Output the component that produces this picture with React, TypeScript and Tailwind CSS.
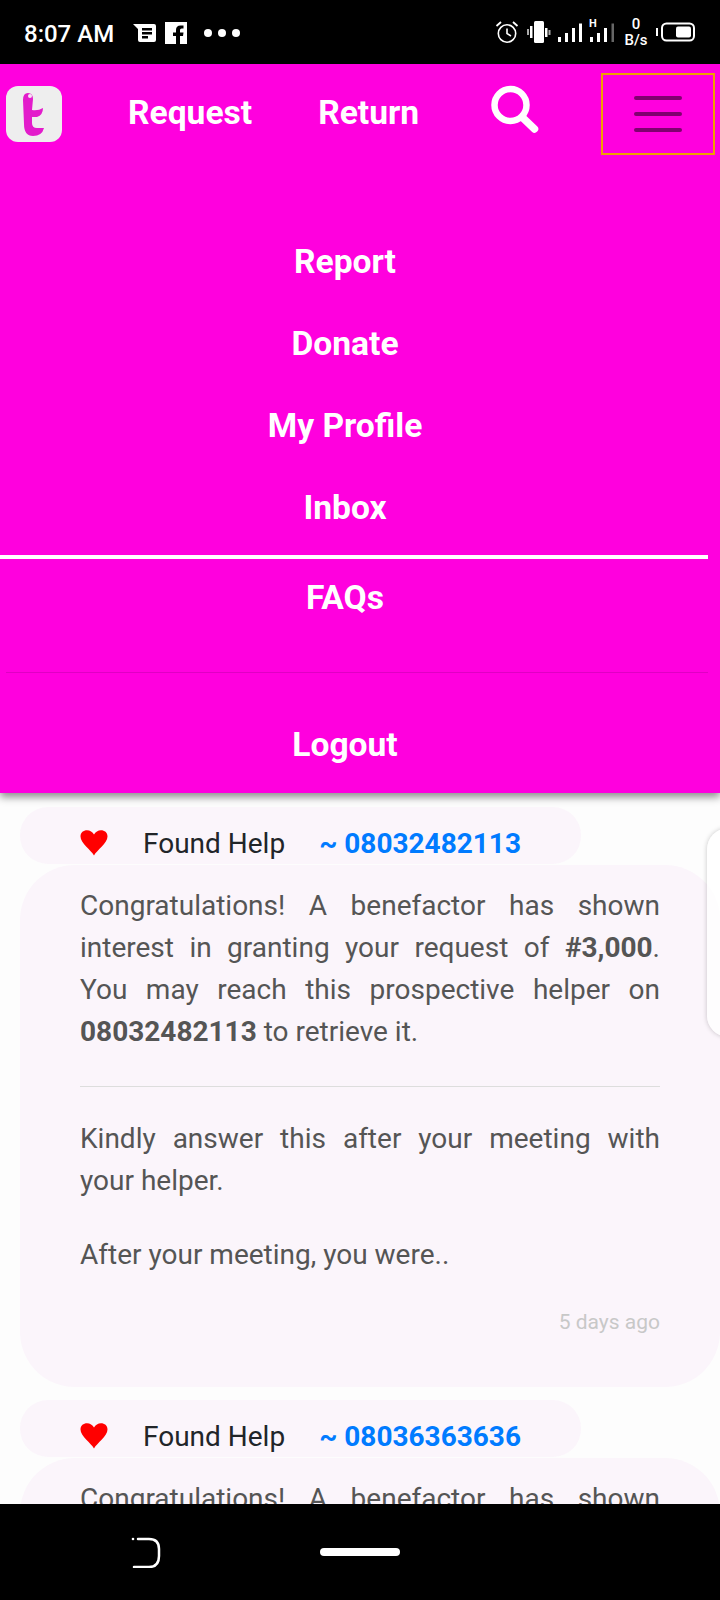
import React from "react";

const roboto = "font-['Roboto',sans-serif]";

function Heart() {
  return (
    <svg width="28" height="26" viewBox="0 0 28 26" className="shrink-0">
      <path d="M14 25.500 C11 20 0.500 13 0.500 6.500 C0.500 2.500 3.500 0.300 7 0.300 C10 0.300 12.500 2 14 4.500 C15.500 2 18 0.300 21 0.300 C24.500 0.300 27.500 2.500 27.500 6.500 C27.500 13 17 20 14 25.500 Z" fill="#ff0000" />
    </svg>
  );
}

function PillHeader({ phone }: { phone: string }) {
  return (
    <div className="box-border flex h-[57px] w-[561px] items-center rounded-[28px] bg-[#fbf5fb] pl-[60px] pt-[14px]">
      <Heart />
      <span className="ml-[35px] text-[28px] leading-none text-[#212529] relative top-[1px]">Found Help</span>
      <span className="ml-[34px] text-[28px] font-bold leading-none text-[#007bff] relative top-[1px]">~ {phone}</span>
    </div>
  );
}

function MenuItem({ label, cls }: { label: string; cls: string }) {
  return <div className={"text-center text-[33.600px] font-bold leading-[36px] text-white " + cls}>{label}</div>;
}

function StatusIcons() {
  return (
    <div className="-mt-[4px] flex items-center">
      <svg width="24" height="24" viewBox="0 0 24 24" fill="none" stroke="#fff" strokeWidth="1.600" className="mr-[8px]">
        <circle cx="12" cy="13.500" r="8.700" />
        <path d="M12 8.500 V13.500 L16 16" />
        <path d="M1.500 6 L6 2 M22.500 6 L18 2" strokeWidth="1.800" />
      </svg>
      <svg width="24" height="24" viewBox="0 0 24 24" fill="#fff" className="mr-[7px]">
        <rect x="0" y="9" width="2" height="6" fill="#aaa" />
        <rect x="3" y="6" width="2.500" height="12" />
        <rect x="7" y="1" width="10" height="22" rx="1.500" />
        <rect x="18" y="8" width="2.500" height="9" />
        <rect x="21.500" y="10" width="2" height="5" fill="#aaa" />
      </svg>
      <svg width="56" height="32" viewBox="0 0 56 32" className="mr-[10px]">
        <rect x="0" y="21" width="3" height="5" fill="#fff" />
        <rect x="7" y="17" width="3" height="9" fill="#fff" />
        <rect x="14" y="12" width="3" height="14" fill="#fff" />
        <rect x="21" y="7.500" width="3" height="18.500" fill="#fff" />
        <text x="31" y="11" fontSize="11" fontWeight="700" fill="#fff" fontFamily="Roboto, sans-serif">H</text>
        <rect x="32" y="21" width="3" height="5" fill="#fff" />
        <rect x="39" y="17" width="3" height="9" fill="#fff" />
        <rect x="46" y="12" width="3" height="14" fill="#fff" />
        <rect x="53.500" y="7.500" width="2.500" height="18.500" fill="#666" />
      </svg>
      <div className="mr-[8px] flex w-[24px] flex-col items-center text-[15px] font-medium leading-[16px] text-white">
        <span>0</span>
        <span>B/s</span>
      </div>
      <svg width="39" height="20" viewBox="0 0 39 20" fill="none">
        <rect x="0" y="6" width="2" height="8" fill="#fff" />
        <rect x="6" y="1.500" width="32" height="17" rx="4.500" stroke="#fff" strokeWidth="2" />
        <rect x="20" y="4.500" width="15" height="11" rx="2" fill="#fff" />
      </svg>
    </div>
  );
}

function Card({ phone, amount, children }: { phone: string; amount: string; children?: React.ReactNode }) {
  return (
    <div className="ml-[20px]">
      <PillHeader phone={phone} />
      <div className="mt-[1px] h-[522px] w-[700px] rounded-[55px] bg-[#fbf5fb] pl-[60px] pr-[60px] pt-[20px] text-[28px] leading-[42px] text-[#555555]">
        <p className="text-justify">
          Congratulations! A benefactor has shown interest in granting your request of <b>{amount}</b>. You may reach
          this prospective helper on <b>{phone}</b> to retrieve it.
        </p>
        {children}
      </div>
    </div>
  );
}

export default function App() {
  return (
    <div className={"relative flex h-[1600px] w-[720px] flex-col overflow-hidden bg-[#fdfdfd] " + roboto}>
      <div className="box-border flex h-[64px] shrink-0 items-center justify-between bg-black pl-[24px] pr-[25px] pt-[4px]">
        <div className="flex items-center">
          <span className="text-[24px] font-medium leading-none text-white">8:07 AM</span>
          <svg width="24" height="20" viewBox="0 0 24 20" className="-mt-[3px] ml-[19px]">
            <path d="M0 1 H21 Q23 1 23 3 V17 Q23 19 21 19 H7 Q5 19 5 17 V6 Z" fill="#fff" />
            <rect x="9" y="5" width="10" height="2.500" fill="#000" />
            <rect x="9" y="9" width="10" height="2.500" fill="#000" />
            <rect x="9" y="13" width="6" height="2.500" fill="#000" />
          </svg>
          <svg width="22" height="22" viewBox="0 0 22 22" className="-mt-[3px] ml-[8px]">
            <rect width="22" height="22" fill="#fff" />
            <path d="M15 22 V14 H18 L18.500 10.500 H15 V8 Q15 6.500 16.700 6.500 H18.500 V3.500 H15.500 Q11 3.500 11 8 V10.500 H8 V14 H11 V22 Z" fill="#000" />
          </svg>
          <div className="-mt-[3px] ml-[17px] flex gap-[6px]">
            <span className="h-[8px] w-[8px] rounded-full bg-white" />
            <span className="h-[8px] w-[8px] rounded-full bg-white" />
            <span className="h-[8px] w-[8px] rounded-full bg-white" />
          </div>
        </div>
        <StatusIcons />
      </div>

      <nav className="relative z-10 h-[729px] shrink-0 bg-[#ff00de] shadow-[0_4px_8px_rgba(0,0,0,0.45)]">
        <div className="flex h-[90px] items-start pl-[6px] pt-[9px]">
          <div className="mt-[13px] flex h-[56px] w-[56px] shrink-0 items-center justify-center rounded-[12px] bg-[#eeeeee]">
            <svg width="56" height="56" viewBox="0 0 56 56">
              <path d="M17 14 Q17 7 22 7 Q27 7 27 13 L26 24 Q32 25 37 22 Q37 29 31 31 L26 31 L26 37 Q26 42 31 42 L38 42 Q36 50 27 50 Q18 50 18 38 Z" fill="#e31ccb" />
              <circle cx="24" cy="10" r="2" fill="#f6e4f4" />
            </svg>
          </div>
          <span className="ml-[66px] mt-[22px] text-[33.600px] font-bold leading-[36px] text-white">Request</span>
          <span className="ml-[66px] mt-[22px] text-[33.600px] font-bold leading-[36px] text-white">Return</span>
          <svg width="48" height="48" viewBox="0 0 48 48" fill="none" className="ml-[72px] mt-[12px] shrink-0">
            <circle cx="19.500" cy="20" r="16" stroke="#fff" strokeWidth="6.500" />
            <path d="M32 33 L43.500 44" stroke="#fff" strokeWidth="7.500" strokeLinecap="round" />
          </svg>
          <div className="ml-[62px] flex h-[82px] w-[114px] shrink-0 flex-col items-center justify-center gap-[12px] border-2 border-[#f0a000]">
            <span className="h-[4px] w-[48px] rounded-full bg-[#800070]" />
            <span className="h-[4px] w-[48px] rounded-full bg-[#800070]" />
            <span className="h-[4px] w-[48px] rounded-full bg-[#800070]" />
          </div>
        </div>
        <div className="w-[690px]">
          <MenuItem label="Report" cls="mt-[90px]" />
          <MenuItem label="Donate" cls="mt-[46px]" />
          <MenuItem label="My Profile" cls="mt-[46px]" />
          <MenuItem label="Inbox" cls="mt-[46px]" />
        </div>
        <div className="mt-[29px] h-[4px] w-[708px] bg-white" />
        <div className="w-[690px]">
          <MenuItem label="FAQs" cls="mt-[21px]" />
        </div>
        <div className="ml-[6px] mt-[56px] h-px w-[702px] bg-[#e000c4]" />
        <div className="w-[690px]">
          <MenuItem label="Logout" cls="mt-[54px]" />
        </div>
      </nav>

      <main className="flex-1 overflow-hidden pt-[14px]">
        <Card phone="08032482113" amount="#3,000">
          <div className="mt-[33px] h-px w-full bg-[#dddddd]" />
          <p className="mt-[31px] text-justify">Kindly answer this after your meeting with your helper.</p>
          <p className="mt-[32px]">After your meeting, you were..</p>
          <p className="mt-[31px] text-right text-[21px] leading-[30px] text-[#c8c8c8]">5 days ago</p>
        </Card>
        <div className="mt-[13px]">
          <Card phone="08036363636" amount="#3,000" />
        </div>
      </main>

      <div className="absolute -right-[30px] top-[828px] h-[209px] w-[43px] rounded-[28px] bg-white/80 shadow-[0_0_5px_rgba(0,0,0,0.22)]" />

      <footer className="relative z-10 flex h-[96px] shrink-0 items-start bg-black">
        <svg width="30" height="32" viewBox="0 0 30 32" fill="none" className="ml-[131px] mt-[32px]">
          <path d="M3 31 H18 Q28 31 28 20 V13 Q28 3 18 3 H7" stroke="#fff" strokeWidth="2.500" strokeLinecap="round" />
          <circle cx="2" cy="3" r="1.300" fill="#fff" />
        </svg>
        <div className="ml-[159px] mt-[44px] h-[8px] w-[80px] rounded-full bg-white" />
      </footer>
    </div>
  );
}
